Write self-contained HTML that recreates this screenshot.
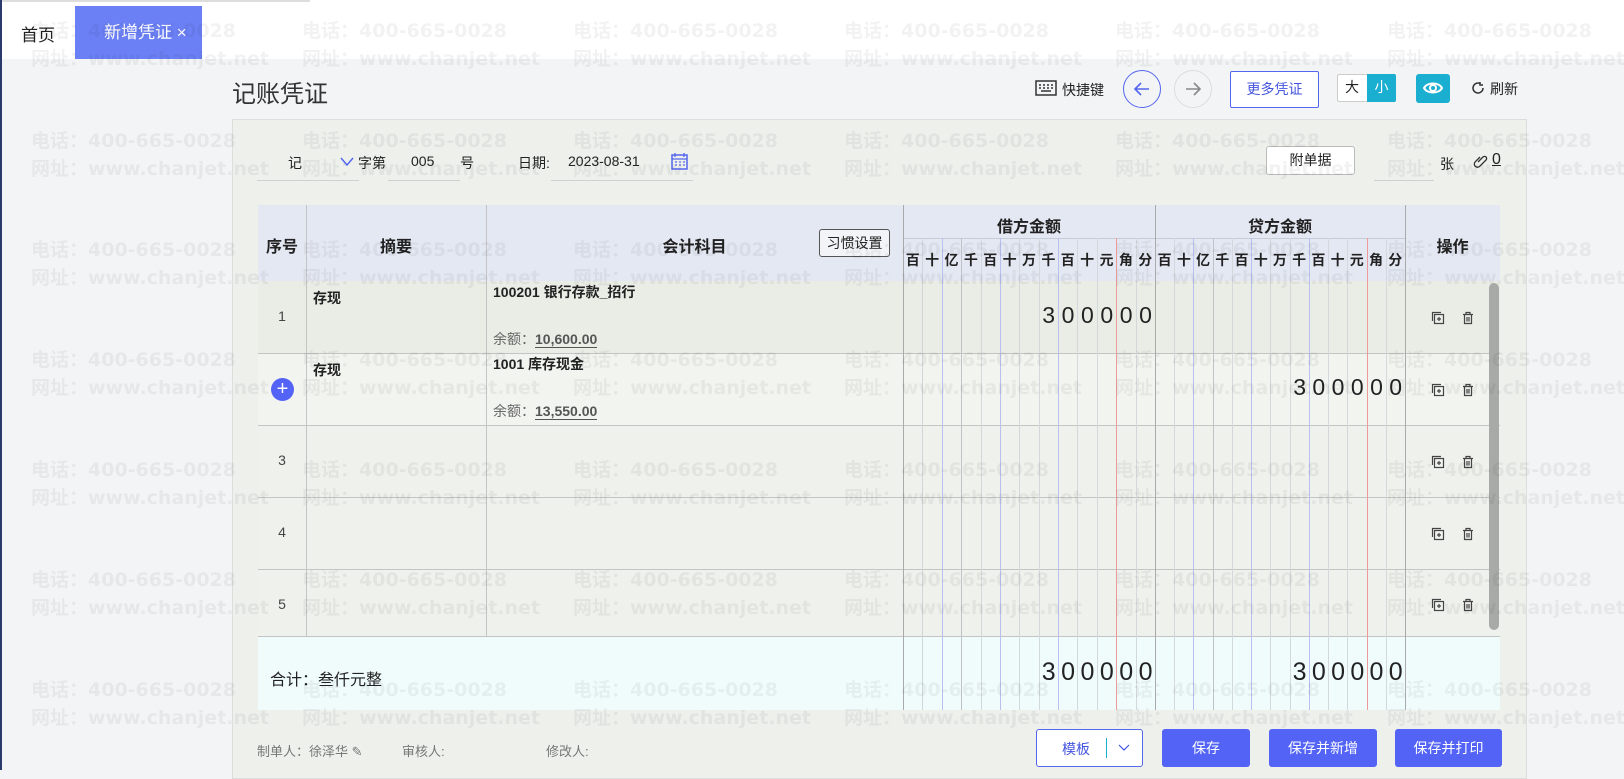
<!DOCTYPE html>
<html><head><meta charset="utf-8"><style>
*{margin:0;padding:0;box-sizing:border-box}
body{width:1624px;height:770px;overflow:hidden;background:#f2f4f6;font-family:"Liberation Sans","Noto Sans CJK SC",sans-serif;color:#222;position:relative;font-size:14px}
.a{position:absolute}
.top{left:0;top:0;width:1624px;height:59px;background:#fff}
.wm{position:absolute;color:rgba(0,0,0,0.05);font-size:19px;font-family:"DejaVu Sans","Noto Sans CJK SC",sans-serif;font-weight:bold;white-space:nowrap;pointer-events:none;z-index:50;line-height:28px}
.btn{position:absolute;background:#5263f5;color:#fff;border-radius:3px;text-align:center;font-size:14px;line-height:38px}
.vl{position:absolute;width:1px;top:238px;height:472px;background:#d3d8dd}
.hl{position:absolute;height:1px;background:#c4c4c4}
.cb{position:absolute;width:1px;background:#c4c4c4}
.dig{position:absolute;display:flex;font-size:23px;letter-spacing:0;color:#222}
.dig span{width:19.38px;text-align:center}
.hd{position:absolute;display:flex;font-size:14px;font-weight:bold;top:250px}
.hd span{width:19.38px;text-align:center}
</style></head><body>
<div class="a top"></div>
<div class="a" style="left:0;top:0;width:310px;height:2px;background:#ddd"></div>
<div class="a" style="left:0;top:0;width:2px;height:770px;background:#2a3a6a"></div>
<div class="a" style="left:21px;top:21px;font-size:17px">首页</div>
<div class="a" style="left:75px;top:6px;width:127px;height:53px;background:#6c80f6;color:#fff;font-size:17px;line-height:53px;padding-left:29px">新增凭证 ×</div>

<div class="a" style="left:232px;top:74px;font-size:24px;color:#333">记账凭证</div>
<svg class="a" style="left:1035px;top:80px" width="22" height="16" viewBox="0 0 22 16"><rect x="1" y="1" width="20" height="14" fill="none" stroke="#333" stroke-width="1.5"/><path d="M4 5h2M8 5h2M12 5h2M16 5h2M4 8h2M8 8h2M12 8h2M16 8h2M6 11h10" stroke="#333" stroke-width="1.5"/></svg>
<div class="a" style="left:1062px;top:80px;font-size:14px">快捷键</div>
<div class="a" style="left:1123px;top:70px;width:38px;height:38px;border:1.5px solid #5566ee;border-radius:50%"></div>
<svg class="a" style="left:1132px;top:79px" width="20" height="20" viewBox="0 0 20 20"><path d="M17 10H3M9 4L3 10l6 6" fill="none" stroke="#5566ee" stroke-width="1.6"/></svg>
<div class="a" style="left:1174px;top:70px;width:38px;height:38px;border:1px solid #ddd;border-radius:50%"></div>
<svg class="a" style="left:1183px;top:79px" width="20" height="20" viewBox="0 0 20 20"><path d="M3 10h14M11 4l6 6-6 6" fill="none" stroke="#888" stroke-width="1.6"/></svg>
<div class="a" style="left:1230px;top:71px;width:89px;height:37px;border:1px solid #5566ee;border-radius:2px;background:#fff;color:#4455dd;text-align:center;line-height:35px">更多凭证</div>
<div class="a" style="left:1337px;top:74px;width:59px;height:28px;border:1px solid #ccc;background:#fff;border-radius:2px"></div>
<div class="a" style="left:1337px;top:74px;width:30px;height:28px;text-align:center;line-height:26px">大</div>
<div class="a" style="left:1367px;top:74px;width:29px;height:28px;background:#1aaed0;color:#fff;text-align:center;line-height:27px;border-radius:0 2px 2px 0">小</div>
<div class="a" style="left:1416px;top:74px;width:34px;height:29px;background:#1aaed0;border-radius:3px"></div>
<svg class="a" style="left:1422px;top:79px" width="22" height="18" viewBox="0 0 22 18"><path d="M2 9c3-6 15-6 18 0c-3 6-15 6-18 0z" fill="none" stroke="#fff" stroke-width="2"/><circle cx="11" cy="9" r="3" fill="none" stroke="#fff" stroke-width="2"/></svg>
<svg class="a" style="left:1471px;top:81px" width="14" height="14" viewBox="0 0 14 14"><path d="M12 7A5 5 0 1 1 9.5 2.7M9 1v3h3" fill="none" stroke="#333" stroke-width="1.5"/></svg>
<div class="a" style="left:1490px;top:79px">刷新</div>

<div class="a" style="left:232px;top:119px;width:1295px;height:660px;background:#edf0eb;border:1px solid #dcdedb"></div>
<div class="a" style="left:288px;top:153px">记</div>
<svg class="a" style="left:340px;top:157px" width="14" height="10"><path d="M1 1l6 7 6-7" fill="none" stroke="#5566ee" stroke-width="1.5"/></svg>
<div class="a" style="left:358px;top:153px">字第</div>
<div class="a" style="left:411px;top:153px">005</div>
<div class="a" style="left:460px;top:153px">号</div>
<div class="a" style="left:518px;top:153px">日期:</div>
<div class="a" style="left:568px;top:153px">2023-08-31</div>
<div class="a" style="left:257px;top:180px;width:102px;height:1px;background:#d0d0d0"></div>
<div class="a" style="left:388px;top:180px;width:72px;height:1px;background:#d0d0d0"></div>
<div class="a" style="left:551px;top:180px;width:142px;height:1px;background:#d0d0d0"></div>
<svg class="a" style="left:671px;top:152px" width="17" height="18" viewBox="0 0 17 18"><rect x="1" y="3" width="15" height="14" fill="none" stroke="#5566ee" stroke-width="1.5"/><path d="M4 1v4M13 1v4M1 7h15M4 10h2M8 10h2M12 10h2M4 13h2M8 13h2M12 13h2" stroke="#5566ee" stroke-width="1.3"/></svg>
<div class="a" style="left:1266px;top:146px;width:89px;height:29px;border:1px solid #bbb;border-radius:3px;background:#fff;text-align:center;line-height:27px">附单据</div>
<div class="a" style="left:1374px;top:180px;width:60px;height:1px;background:#d0d0d0"></div>
<div class="a" style="left:1440px;top:154px">张</div>
<svg class="a" style="left:1472px;top:152px" width="16" height="16" viewBox="0 0 16 16"><path d="M6 10l5-5a2 2 0 0 1 3 3l-6 6a3 3 0 0 1-5-4l5-5" fill="none" stroke="#333" stroke-width="1.3"/></svg>
<div class="a" style="left:1492px;top:151px;text-decoration:underline;font-size:16px">0</div>

<div class="a" style="left:258px;top:205px;width:1242px;height:76px;background:#e4e8f3"></div>
<div class="a" style="left:258px;top:281px;width:1242px;height:72px;background:#eaede6"></div>
<div class="a" style="left:258px;top:353px;width:1242px;height:72px;background:#f2f4f0"></div>
<div class="a" style="left:258px;top:425px;width:1242px;height:211px;background:#eff1ed"></div>
<div class="a" style="left:258px;top:636px;width:1242px;height:74px;background:#f0fcfc"></div>
<div class="a" style="left:903px;top:238px;width:502px;height:1px;background:#c8ccd6"></div>
<div class="hl" style="left:258px;top:353px;width:1242px"></div>
<div class="hl" style="left:258px;top:425px;width:1242px"></div>
<div class="hl" style="left:258px;top:497px;width:1242px"></div>
<div class="hl" style="left:258px;top:569px;width:1242px"></div>
<div class="hl" style="left:258px;top:636px;width:1242px"></div>
<div class="vl" style="left:922px;background:#d0d5da"></div><div class="vl" style="left:942px;background:#b9c0f0"></div><div class="vl" style="left:961px;background:#bfc3c8"></div><div class="vl" style="left:981px"></div><div class="vl" style="left:1000px;background:#b9c0f0"></div><div class="vl" style="left:1019px"></div><div class="vl" style="left:1039px"></div><div class="vl" style="left:1058px;background:#b9c0f0"></div><div class="vl" style="left:1077px"></div><div class="vl" style="left:1097px"></div><div class="vl" style="left:1116px;background:#ee9a9a"></div><div class="vl" style="left:1136px"></div>
<div class="vl" style="left:1174px"></div><div class="vl" style="left:1193px;background:#b9c0f0"></div><div class="vl" style="left:1213px;background:#bfc3c8"></div><div class="vl" style="left:1232px"></div><div class="vl" style="left:1251px;background:#b9c0f0"></div><div class="vl" style="left:1270px"></div><div class="vl" style="left:1290px"></div><div class="vl" style="left:1309px;background:#b9c0f0"></div><div class="vl" style="left:1328px"></div><div class="vl" style="left:1347px"></div><div class="vl" style="left:1367px;background:#ee9a9a"></div><div class="vl" style="left:1386px"></div>
<div class="cb" style="left:306px;top:205px;height:431px"></div>
<div class="cb" style="left:486px;top:205px;height:431px"></div>
<div class="cb" style="left:903px;top:205px;height:505px;background:#aaa"></div>
<div class="cb" style="left:1155px;top:205px;height:505px;background:#aaa"></div>
<div class="cb" style="left:1405px;top:205px;height:505px;background:#aaa"></div>
<div class="a" style="left:258px;top:233px;width:48px;text-align:center;font-weight:bold;font-size:16px">序号</div>
<div class="a" style="left:306px;top:233px;width:180px;text-align:center;font-weight:bold;font-size:16px">摘要</div>
<div class="a" style="left:486px;top:233px;width:417px;text-align:center;font-weight:bold;font-size:16px">会计科目</div>
<div class="a" style="left:819px;top:229px;width:71px;height:28px;border:1px solid #555;border-radius:3px;background:#f3f4f7;text-align:center;line-height:26px;font-size:14px">习惯设置</div>
<div class="a" style="left:903px;top:213px;width:252px;text-align:center;font-weight:bold;font-size:16px">借方金额</div>
<div class="a" style="left:1155px;top:213px;width:250px;text-align:center;font-weight:bold;font-size:16px">贷方金额</div>
<div class="a" style="left:1405px;top:233px;width:95px;text-align:center;font-weight:bold;font-size:16px">操作</div>
<div class="hd" style="left:903px"><span>百</span><span>十</span><span>亿</span><span>千</span><span>百</span><span>十</span><span>万</span><span>千</span><span>百</span><span>十</span><span>元</span><span>角</span><span>分</span></div>
<div class="hd" style="left:1155px"><span style="width:19.23px">百</span><span style="width:19.23px">十</span><span style="width:19.23px">亿</span><span style="width:19.23px">千</span><span style="width:19.23px">百</span><span style="width:19.23px">十</span><span style="width:19.23px">万</span><span style="width:19.23px">千</span><span style="width:19.23px">百</span><span style="width:19.23px">十</span><span style="width:19.23px">元</span><span style="width:19.23px">角</span><span style="width:19.23px">分</span></div>
<div class="a" style="left:258px;top:308px;width:48px;text-align:center;color:#444">1</div>
<div class="a" style="left:313px;top:288px;font-weight:bold;font-size:14px">存现</div>
<div class="a" style="left:493px;top:282px;font-weight:bold;font-size:14px">100201 银行存款_招行</div>
<div class="a" style="left:493px;top:329px;font-size:14px;color:#666">余额：<b style="color:#555;border-bottom:1px solid #555">10,600.00</b></div>
<div class="dig" style="left:1039px;top:302px"><span>3</span><span>0</span><span>0</span><span>0</span><span>0</span><span>0</span></div>
<div class="a" style="left:271px;top:378px;width:23px;height:23px;border-radius:50%;background:#5263f5;color:#fff;text-align:center;line-height:22px;font-size:20px">+</div>
<div class="a" style="left:313px;top:360px;font-weight:bold;font-size:14px">存现</div>
<div class="a" style="left:493px;top:354px;font-weight:bold;font-size:14px">1001 库存现金</div>
<div class="a" style="left:493px;top:401px;font-size:14px;color:#666">余额：<b style="color:#555;border-bottom:1px solid #555">13,550.00</b></div>
<div class="dig" style="left:1290px;top:374px"><span style="width:19.23px">3</span><span style="width:19.23px">0</span><span style="width:19.23px">0</span><span style="width:19.23px">0</span><span style="width:19.23px">0</span><span style="width:19.23px">0</span></div>
<div class="a" style="left:258px;top:452px;width:48px;text-align:center;color:#444">3</div>
<div class="a" style="left:258px;top:524px;width:48px;text-align:center;color:#444">4</div>
<div class="a" style="left:258px;top:596px;width:48px;text-align:center;color:#444">5</div>
<div class="a" style="left:270px;top:666px;font-size:16px">合计：叁仟元整</div>
<div class="dig" style="left:1039px;top:658px;font-size:25px"><span>3</span><span>0</span><span>0</span><span>0</span><span>0</span><span>0</span></div>
<div class="dig" style="left:1290px;top:658px;font-size:25px"><span style="width:19.23px">3</span><span style="width:19.23px">0</span><span style="width:19.23px">0</span><span style="width:19.23px">0</span><span style="width:19.23px">0</span><span style="width:19.23px">0</span></div>
<svg style="display:none"><symbol id="cp" viewBox="0 0 14 14"><rect x="3.5" y="3.5" width="9" height="9" fill="none" stroke="#444" stroke-width="1.2"/><path d="M1.5 10V1.5H10M8 6v4M6 8h4" fill="none" stroke="#444" stroke-width="1.2"/></symbol><symbol id="tr" viewBox="0 0 14 14"><path d="M2 3.5h10M5 3.5V1.5h4v2M3.5 3.5v9h7v-9M6 6v4.5M8 6v4.5" fill="none" stroke="#444" stroke-width="1.2"/></symbol></svg>
<svg class="a" style="left:1431px;top:311px" width="14" height="14"><use href="#cp"/></svg><svg class="a" style="left:1461px;top:311px" width="14" height="14"><use href="#tr"/></svg>
<svg class="a" style="left:1431px;top:383px" width="14" height="14"><use href="#cp"/></svg><svg class="a" style="left:1461px;top:383px" width="14" height="14"><use href="#tr"/></svg>
<svg class="a" style="left:1431px;top:455px" width="14" height="14"><use href="#cp"/></svg><svg class="a" style="left:1461px;top:455px" width="14" height="14"><use href="#tr"/></svg>
<svg class="a" style="left:1431px;top:527px" width="14" height="14"><use href="#cp"/></svg><svg class="a" style="left:1461px;top:527px" width="14" height="14"><use href="#tr"/></svg>
<svg class="a" style="left:1431px;top:598px" width="14" height="14"><use href="#cp"/></svg><svg class="a" style="left:1461px;top:598px" width="14" height="14"><use href="#tr"/></svg>
<div class="a" style="left:1489px;top:283px;width:10px;height:347px;background:#a7aaa6;border-radius:5px"></div>
<div class="a" style="left:257px;top:741px;font-size:13px;color:#777">制单人：徐泽华 ✎</div>
<div class="a" style="left:402px;top:741px;font-size:13px;color:#777">审核人:</div>
<div class="a" style="left:546px;top:741px;font-size:13px;color:#777">修改人:</div>
<div class="a" style="left:1036px;top:729px;width:107px;height:38px;border:1px solid #5566ee;background:#fff;border-radius:3px"></div>
<div class="a" style="left:1062px;top:739px;color:#4455dd">模板</div>
<div class="a" style="left:1106px;top:738px;width:1px;height:20px;background:#1aaed0"></div>
<svg class="a" style="left:1118px;top:744px" width="12" height="8"><path d="M1 1l5 5 5-5" fill="none" stroke="#4455dd" stroke-width="1.2"/></svg>
<div class="btn" style="left:1162px;top:729px;width:88px">保存</div>
<div class="btn" style="left:1269px;top:729px;width:108px">保存并新增</div>
<div class="btn" style="left:1395px;top:729px;width:107px">保存并打印</div>
<div class="wm" style="left:31px;top:17px">电话：400-665-0028<br>网址：www.chanjet.net</div>
<div class="wm" style="left:302px;top:17px">电话：400-665-0028<br>网址：www.chanjet.net</div>
<div class="wm" style="left:573px;top:17px">电话：400-665-0028<br>网址：www.chanjet.net</div>
<div class="wm" style="left:844px;top:17px">电话：400-665-0028<br>网址：www.chanjet.net</div>
<div class="wm" style="left:1115px;top:17px">电话：400-665-0028<br>网址：www.chanjet.net</div>
<div class="wm" style="left:1387px;top:17px">电话：400-665-0028<br>网址：www.chanjet.net</div>
<div class="wm" style="left:31px;top:127px">电话：400-665-0028<br>网址：www.chanjet.net</div>
<div class="wm" style="left:302px;top:127px">电话：400-665-0028<br>网址：www.chanjet.net</div>
<div class="wm" style="left:573px;top:127px">电话：400-665-0028<br>网址：www.chanjet.net</div>
<div class="wm" style="left:844px;top:127px">电话：400-665-0028<br>网址：www.chanjet.net</div>
<div class="wm" style="left:1115px;top:127px">电话：400-665-0028<br>网址：www.chanjet.net</div>
<div class="wm" style="left:1387px;top:127px">电话：400-665-0028<br>网址：www.chanjet.net</div>
<div class="wm" style="left:31px;top:236px">电话：400-665-0028<br>网址：www.chanjet.net</div>
<div class="wm" style="left:302px;top:236px">电话：400-665-0028<br>网址：www.chanjet.net</div>
<div class="wm" style="left:573px;top:236px">电话：400-665-0028<br>网址：www.chanjet.net</div>
<div class="wm" style="left:844px;top:236px">电话：400-665-0028<br>网址：www.chanjet.net</div>
<div class="wm" style="left:1115px;top:236px">电话：400-665-0028<br>网址：www.chanjet.net</div>
<div class="wm" style="left:1387px;top:236px">电话：400-665-0028<br>网址：www.chanjet.net</div>
<div class="wm" style="left:31px;top:346px">电话：400-665-0028<br>网址：www.chanjet.net</div>
<div class="wm" style="left:302px;top:346px">电话：400-665-0028<br>网址：www.chanjet.net</div>
<div class="wm" style="left:573px;top:346px">电话：400-665-0028<br>网址：www.chanjet.net</div>
<div class="wm" style="left:844px;top:346px">电话：400-665-0028<br>网址：www.chanjet.net</div>
<div class="wm" style="left:1115px;top:346px">电话：400-665-0028<br>网址：www.chanjet.net</div>
<div class="wm" style="left:1387px;top:346px">电话：400-665-0028<br>网址：www.chanjet.net</div>
<div class="wm" style="left:31px;top:456px">电话：400-665-0028<br>网址：www.chanjet.net</div>
<div class="wm" style="left:302px;top:456px">电话：400-665-0028<br>网址：www.chanjet.net</div>
<div class="wm" style="left:573px;top:456px">电话：400-665-0028<br>网址：www.chanjet.net</div>
<div class="wm" style="left:844px;top:456px">电话：400-665-0028<br>网址：www.chanjet.net</div>
<div class="wm" style="left:1115px;top:456px">电话：400-665-0028<br>网址：www.chanjet.net</div>
<div class="wm" style="left:1387px;top:456px">电话：400-665-0028<br>网址：www.chanjet.net</div>
<div class="wm" style="left:31px;top:566px">电话：400-665-0028<br>网址：www.chanjet.net</div>
<div class="wm" style="left:302px;top:566px">电话：400-665-0028<br>网址：www.chanjet.net</div>
<div class="wm" style="left:573px;top:566px">电话：400-665-0028<br>网址：www.chanjet.net</div>
<div class="wm" style="left:844px;top:566px">电话：400-665-0028<br>网址：www.chanjet.net</div>
<div class="wm" style="left:1115px;top:566px">电话：400-665-0028<br>网址：www.chanjet.net</div>
<div class="wm" style="left:1387px;top:566px">电话：400-665-0028<br>网址：www.chanjet.net</div>
<div class="wm" style="left:31px;top:676px">电话：400-665-0028<br>网址：www.chanjet.net</div>
<div class="wm" style="left:302px;top:676px">电话：400-665-0028<br>网址：www.chanjet.net</div>
<div class="wm" style="left:573px;top:676px">电话：400-665-0028<br>网址：www.chanjet.net</div>
<div class="wm" style="left:844px;top:676px">电话：400-665-0028<br>网址：www.chanjet.net</div>
<div class="wm" style="left:1115px;top:676px">电话：400-665-0028<br>网址：www.chanjet.net</div>
<div class="wm" style="left:1387px;top:676px">电话：400-665-0028<br>网址：www.chanjet.net</div>
</body></html>
